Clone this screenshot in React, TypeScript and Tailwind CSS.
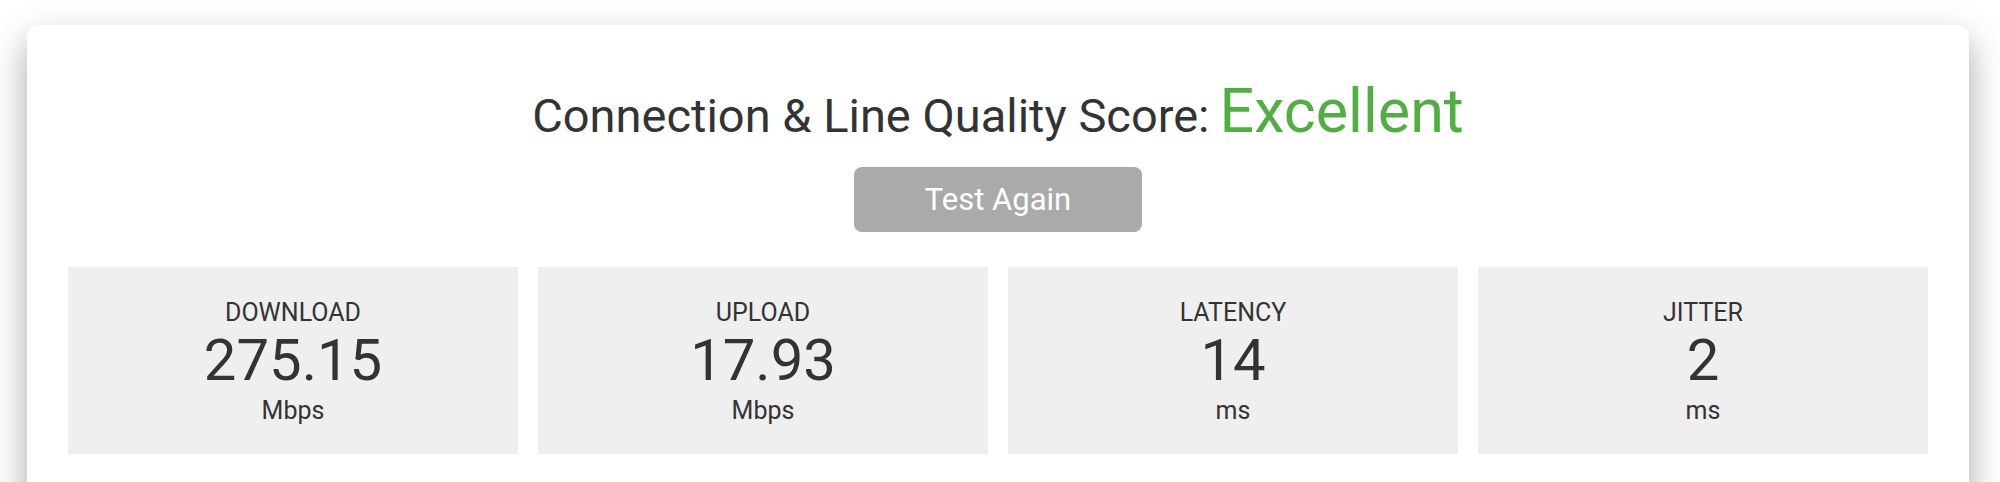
import React from "react";

const stats = [
  { label: "DOWNLOAD", value: "275.15", unit: "Mbps" },
  { label: "UPLOAD", value: "17.93", unit: "Mbps" },
  { label: "LATENCY", value: "14", unit: "ms" },
  { label: "JITTER", value: "2", unit: "ms" },
];

export default function App() {
  return (
    <div
      className="w-[2000px] h-[482px] overflow-hidden bg-white pt-[25px] pl-[27px] pr-[31px]"
      style={{ fontFamily: "Roboto, 'Liberation Sans', sans-serif" }}
    >
      <div className="bg-white rounded-[12px] shadow-[0_15px_35px_rgba(0,0,0,0.35)] h-[520px] px-[41px] pt-[56px] text-[#333333]">
        <div className="flex items-baseline justify-center">
          <span className="text-[47px] leading-[48px]">Connection &amp; Line Quality Score:</span>
          <span className="text-[61px] leading-[60px] text-[#52ae44] ml-[10px]">Excellent</span>
        </div>
        <div className="flex justify-center mt-[26px]">
          <button className="w-[288px] h-[65px] rounded-[8px] bg-[#aaaaaa] text-white text-[31px] leading-none">
            Test Again
          </button>
        </div>
        <div className="grid grid-cols-4 gap-[20px] mt-[35px]">
          {stats.map((s) => (
            <div key={s.label} className="bg-[#efefef] h-[187px] pt-[32px] flex flex-col items-center">
              <div className="text-[25px] leading-[28px]">{s.label}</div>
              <div className="text-[58px] leading-[66px]">{s.value}</div>
              <div className="text-[25px] leading-[36px]">{s.unit}</div>
            </div>
          ))}
        </div>
      </div>
    </div>
  );
}
